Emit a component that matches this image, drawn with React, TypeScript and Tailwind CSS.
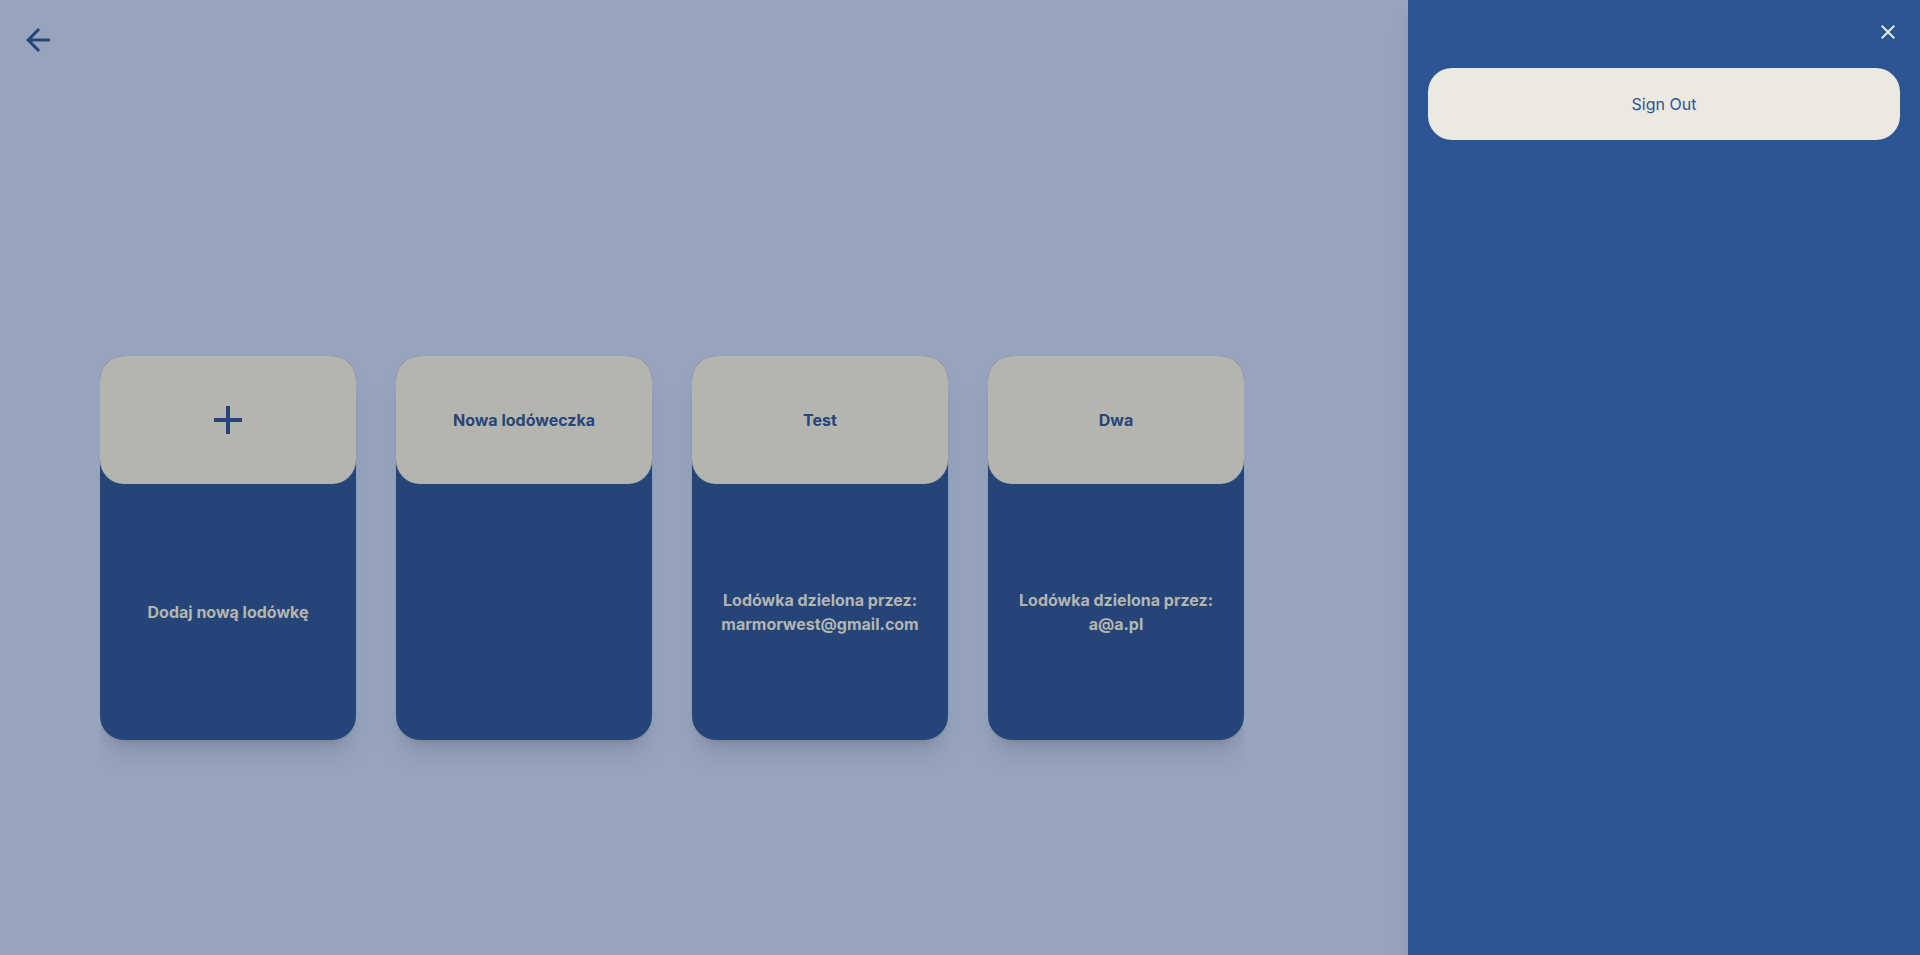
import { MdAdd, MdArrowBack, MdClose } from "react-icons/md";

type Fridge = { name: string; sharedBy?: string };

const fridges: Fridge[] = [
  { name: "Nowa lodóweczka" },
  { name: "Test", sharedBy: "marmorwest@gmail.com" },
  { name: "Dwa", sharedBy: "a@a.pl" },
];

const cardClass =
  "flex h-96 w-64 shrink-0 flex-col rounded-3xl bg-[#254579] text-center font-bold text-[#b5b5b0] shadow-xl";
const headClass =
  "flex h-32 w-full shrink-0 items-center justify-center rounded-3xl bg-[#b5b5b0] text-[#254579]";
const bodyClass = "flex flex-1 flex-col items-center justify-center";

function FridgeCard({ name, sharedBy }: Fridge) {
  return (
    <button type="button" className={cardClass}>
      <span className={headClass}>{name}</span>
      <span className={bodyClass}>
        {sharedBy && (
          <>
            <span>Lodówka dzielona przez:</span>
            <span>{sharedBy}</span>
          </>
        )}
      </span>
    </button>
  );
}

export default function App() {
  return (
    <div className="flex min-h-screen bg-[#97a4be] font-['Inter',sans-serif] text-base">
      <main className="flex min-w-0 flex-1 flex-col px-5 pt-[22px]">
        <header className="flex">
          <button type="button" aria-label="Wstecz" className="text-[#254579]">
            <MdArrowBack size={36} />
          </button>
        </header>
        <div className="flex flex-1 items-center px-20 pt-[83px]">
          <section className="flex gap-10 overflow-hidden py-12">
            <button type="button" className={cardClass}>
              <span className={headClass}>
                <MdAdd size={48} />
              </span>
              <span className={bodyClass}>Dodaj nową lodówkę</span>
            </button>
            {fridges.map((fridge) => (
              <FridgeCard key={fridge.name} {...fridge} />
            ))}
          </section>
        </div>
      </main>
      <aside className="flex w-lg shrink-0 flex-col gap-6 bg-[#2b5593] p-5 shadow-xl">
        <button type="button" aria-label="Zamknij" className="mr-0 self-end text-[#ece9e0]">
          <MdClose size={24} />
        </button>
        <button
          type="button"
          className="h-18 w-full rounded-3xl bg-[#ece9e0] text-[#2b5593]"
        >
          Sign Out
        </button>
      </aside>
    </div>
  );
}
